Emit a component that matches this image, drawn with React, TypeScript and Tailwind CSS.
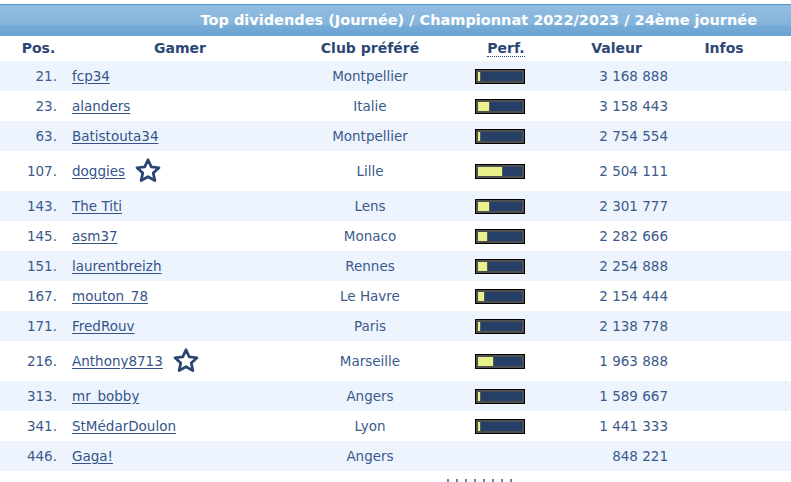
import { Fragment } from "react";

type Row = {
  pos: number;
  name: string;
  club: string;
  perf: number | null;
  value: string;
  star?: boolean;
};

const rows: Row[] = [
  { pos: 21, name: "fcp34", club: "Montpellier", perf: 3, value: "3 168 888" },
  { pos: 23, name: "alanders", club: "Italie", perf: 12, value: "3 158 443" },
  { pos: 63, name: "Batistouta34", club: "Montpellier", perf: 3, value: "2 754 554" },
  { pos: 107, name: "doggies", club: "Lille", perf: 25, value: "2 504 111", star: true },
  { pos: 143, name: "The Titi", club: "Lens", perf: 12, value: "2 301 777" },
  { pos: 145, name: "asm37", club: "Monaco", perf: 10, value: "2 282 666" },
  { pos: 151, name: "laurentbreizh", club: "Rennes", perf: 10, value: "2 254 888" },
  { pos: 167, name: "mouton_78", club: "Le Havre", perf: 7, value: "2 154 444" },
  { pos: 171, name: "FredRouv", club: "Paris", perf: 3, value: "2 138 778" },
  { pos: 216, name: "Anthony8713", club: "Marseille", perf: 16, value: "1 963 888", star: true },
  { pos: 313, name: "mr_bobby", club: "Angers", perf: 3, value: "1 589 667" },
  { pos: 341, name: "StMédarDoulon", club: "Lyon", perf: 3, value: "1 441 333" },
  { pos: 446, name: "Gaga!", club: "Angers", perf: null, value: "848 221" },
];

const cols = "grid grid-cols-[67px_226px_154px_106px_127px_88px_1fr]";

function Star() {
  return (
    <svg width="30" height="30" viewBox="0 0 24 24" className="shrink-0">
      <path
        d="M12 3l2.6 5.7 6.2.7-4.6 4.2 1.3 6.1L12 16.6 6.5 19.7l1.3-6.1-4.6-4.2 6.2-.7z"
        fill="none"
        stroke="#2b4570"
        strokeWidth="2.2"
        strokeLinejoin="round"
      />
    </svg>
  );
}

function PerfBar({ fill }: { fill: number }) {
  return (
    <div className="h-[15px] w-[50px] border border-black bg-[#4f4f4f] p-[2px]">
      <div className="flex h-full w-full bg-[#253f67]">
        <div
          className="h-full border-r border-[#5b5b5b] bg-[#e9f28a]"
          style={{ width: fill }}
        />
      </div>
    </div>
  );
}

export default function App() {
  return (
    <div className="min-h-[482px] w-[791px] overflow-hidden bg-white font-['DejaVu_Sans',Verdana,sans-serif] text-[13.5px] text-[#3b5a8c]">
      <div className="mt-[4px] flex h-[32px] items-center justify-end border-t border-[#4f93d2] bg-[linear-gradient(to_bottom,#92bde1_0%,#86b5dc_60%,#74aad6_70%,#6aa2d0_100%)] pr-[34px]">
        <span className="text-[14.5px] font-bold text-white">
          Top dividendes (Journée) / Championnat 2022/2023 / 24ème journée
        </span>
      </div>

      <div className={`${cols} h-[25px] items-center text-[14px] font-bold text-[#2d4775]`}>
        <div className="pl-[10px] text-center">Pos.</div>
        <div className="text-center">Gamer</div>
        <div className="text-center">Club préféré</div>
        <div className="pl-[12px] text-center">
          <span className="border-b border-dotted border-[#2d4775]">Perf.</span>
        </div>
        <div className="text-center">Valeur</div>
        <div className="text-center">Infos</div>
        <div />
      </div>

      {rows.map((r, i) => (
        <div
          key={r.pos}
          className={`${cols} items-center ${r.star ? "h-[40px]" : "h-[30px]"} ${
            i % 2 === 0 ? "bg-[#edf4fd]" : "bg-white"
          }`}
        >
          <div className="pr-[10px] text-right">{r.pos}.</div>
          <div className="flex items-center gap-[8px] pl-[5px]">
            <a href="#" className="text-[#34548a] underline underline-offset-2">
              {r.name}
            </a>
            {r.star && <Star />}
          </div>
          <div className="text-center">{r.club}</div>
          <div className="flex justify-center">
            {r.perf !== null && <PerfBar fill={r.perf} />}
          </div>
          <div className="pr-[12px] text-right">{r.value}</div>
          <div />
          <div />
        </div>
      ))}

      <div className="flex h-[11px] items-end pl-[447px]">
        {[0, 1, 2, 3, 4, 5, 6, 7].map((k) => (
          <Fragment key={k}>
            <span className="mr-[7px] h-[3px] w-[2px] bg-[#6b84ad]" />
          </Fragment>
        ))}
      </div>
    </div>
  );
}
